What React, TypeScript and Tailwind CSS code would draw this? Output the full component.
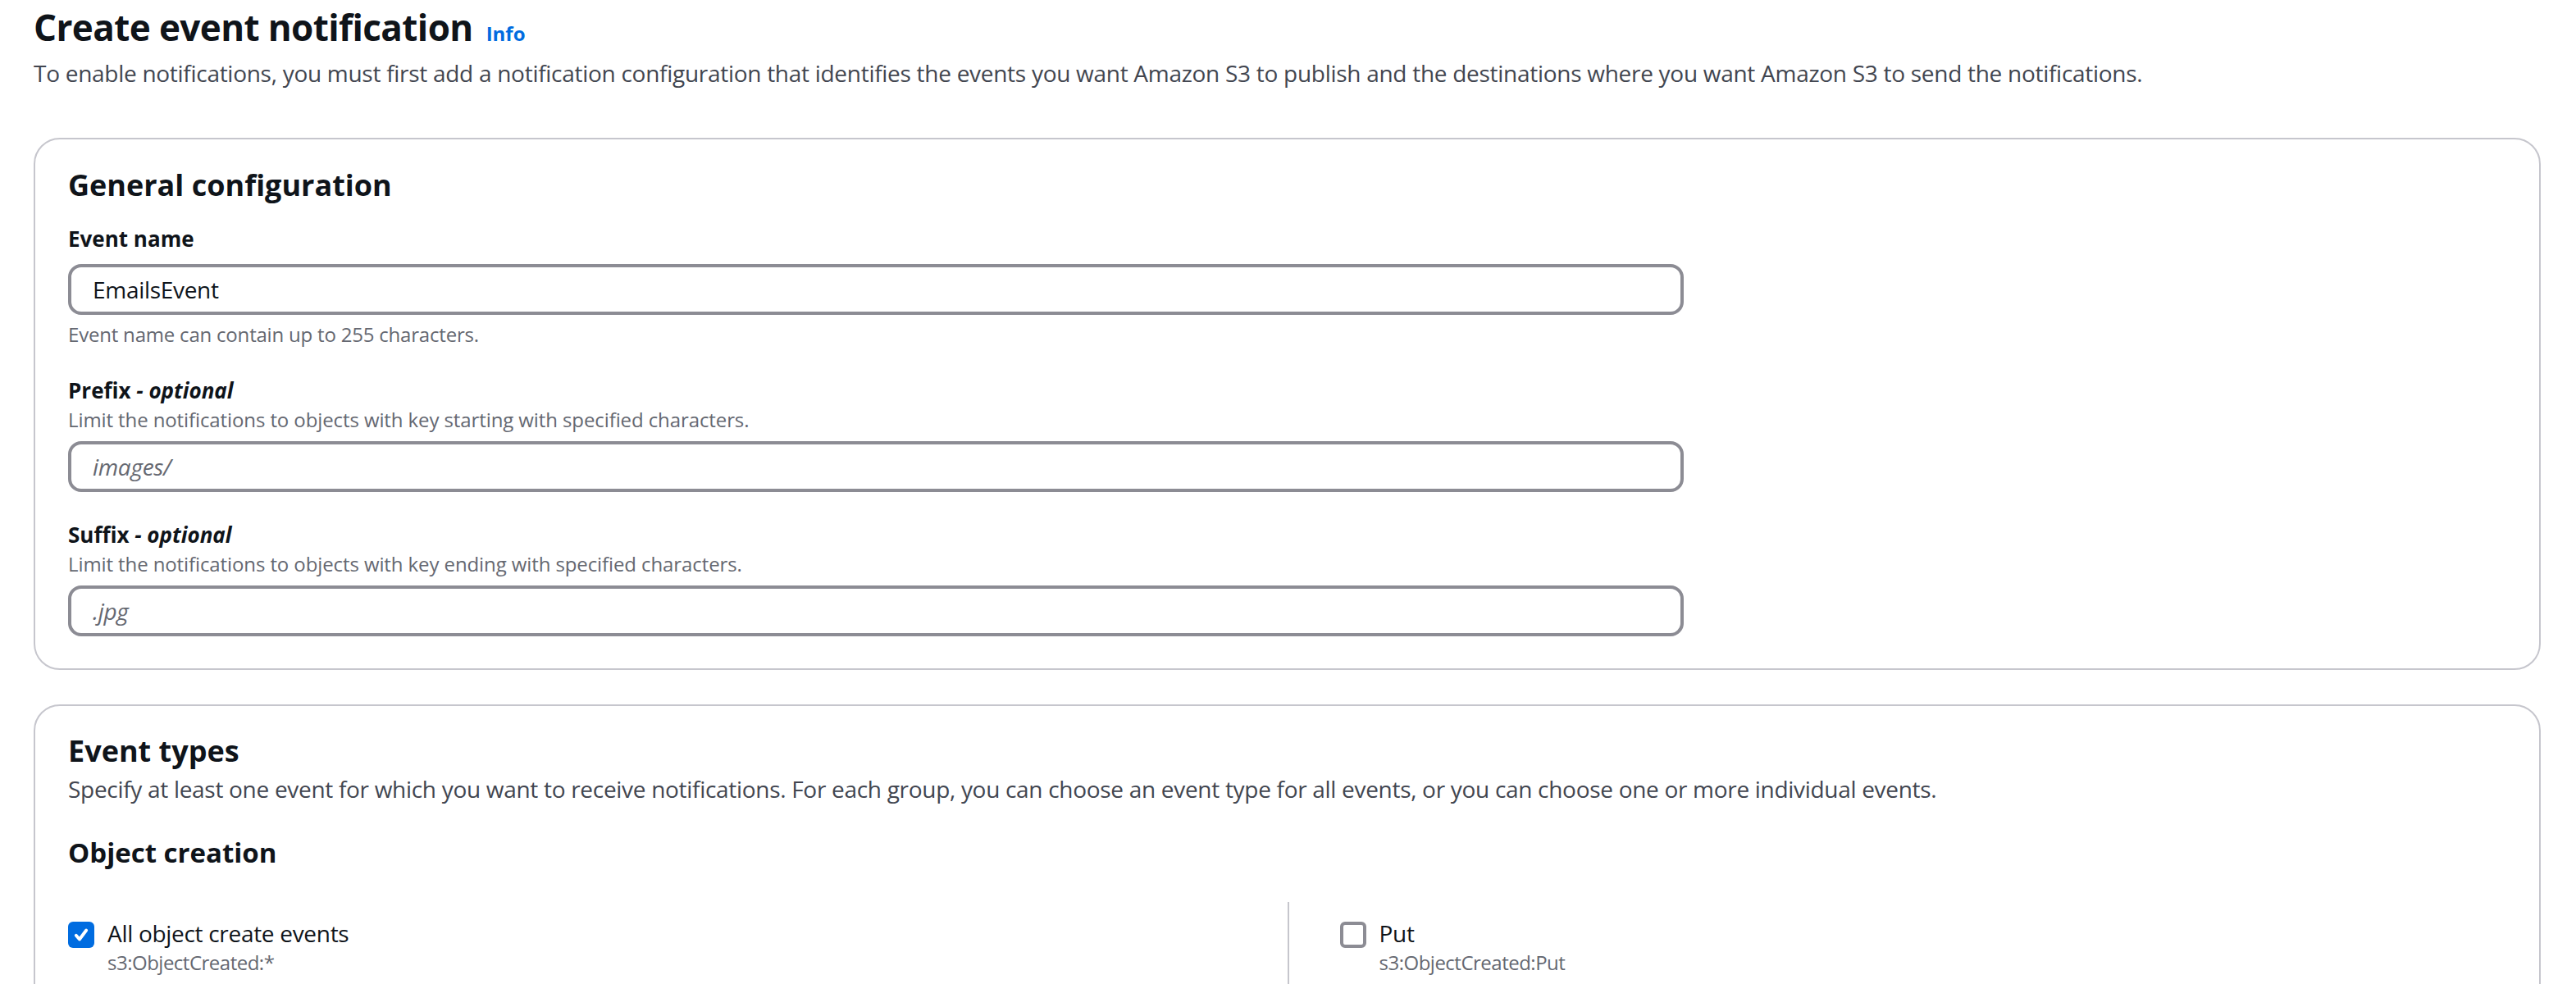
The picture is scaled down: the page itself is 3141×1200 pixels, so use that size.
import React from "react";

const font = { fontFamily: '"Open Sans", "Liberation Sans", sans-serif' };

type FieldProps = {
  label: string;
  optional?: boolean;
  description?: string;
  hint?: string;
  value?: string;
  placeholder?: string;
};

const Field = ({ label, optional, description, hint, value, placeholder }: FieldProps) => (
  <div className="flex flex-col">
    <label className="text-[26px] leading-[40px] font-bold text-[#0f141a]">
      {label}
      {optional && <span className="italic"> - optional</span>}
    </label>
    {description && (
      <p className="text-[24px] leading-[32px] tracking-[-0.1px] text-[#656871]">{description}</p>
    )}
    <div
      className={`w-[1970px] h-[62px] border-[4px] border-[#8c8c94] rounded-[16px] flex items-center px-[26px] text-[28px] tracking-[-0.3px] ${
        description ? "mt-[10px]" : "mt-[11px]"
      }`}
    >
      {value ? (
        <span className="text-[#0f141a]">{value}</span>
      ) : (
        <span className="italic text-[#656871]">{placeholder}</span>
      )}
    </div>
    {hint && (
      <p className="mt-[8px] text-[24px] leading-[32px] tracking-[-0.2px] text-[#656871]">{hint}</p>
    )}
  </div>
);

const Checkbox = ({ checked }: { checked?: boolean }) =>
  checked ? (
    <div className="w-[32px] h-[32px] rounded-[6px] bg-[#006ce0] flex items-center justify-center shrink-0">
      <svg width="22" height="22" viewBox="0 0 16 16" fill="none">
        <path d="M3.5 8.5l3 3.5 6-8" stroke="#fff" strokeWidth="2.8" strokeLinecap="round" strokeLinejoin="round" />
      </svg>
    </div>
  ) : (
    <div className="w-[32px] h-[32px] rounded-[6px] border-[4px] border-[#8c8c94] bg-white shrink-0" />
  );

const Option = ({ label, api, checked }: { label: string; api: string; checked?: boolean }) => (
  <div className="flex items-start gap-[16px]">
    <div className="pt-[6px]">
      <Checkbox checked={checked} />
    </div>
    <div className="flex flex-col">
      <span className="text-[28px] leading-[40px] tracking-[-0.3px] text-[#0f141a]">{label}</span>
      <span className="text-[24px] leading-[32px] tracking-[-0.5px] text-[#656871]">{api}</span>
    </div>
  </div>
);

export default function App() {
  return (
    <div className="min-h-screen bg-white pl-[41px] pr-[43px] pt-[3px]" style={font}>
      {/* Page header */}
      <div className="flex items-baseline gap-[16px]">
        <h1 className="text-[44px] leading-[60px] font-bold tracking-[-0.6px] text-[#0f141a]">
          Create event notification
        </h1>
        <a className="text-[24px] font-bold text-[#006ce0]">Info</a>
      </div>
      <p className="mt-[6px] text-[28px] leading-[40px] tracking-[-0.28px] text-[#424650]">
        To enable notifications, you must first add a notification configuration that identifies the events you
        want Amazon S3 to publish and the destinations where you want Amazon S3 to send the notifications.
      </p>

      {/* General configuration */}
      <section className="mt-[59px] border-2 border-[#c6c6cd] rounded-[32px] px-[40px] pt-[34px] pb-[39px]">
        <h2 className="text-[36px] leading-[44px] font-bold text-[#0f141a]">General configuration</h2>
        <div className="mt-[23px] flex flex-col gap-[32px]">
          <Field
            label="Event name"
            value="EmailsEvent"
            hint="Event name can contain up to 255 characters."
          />
          <Field
            label="Prefix"
            optional
            description="Limit the notifications to objects with key starting with specified characters."
            placeholder="images/"
          />
          <Field
            label="Suffix"
            optional
            description="Limit the notifications to objects with key ending with specified characters."
            placeholder=".jpg"
          />
        </div>
      </section>

      {/* Event types */}
      <section className="mt-[42px] border-2 border-[#c6c6cd] rounded-[32px] px-[40px] pt-[33px] pb-[40px]">
        <h2 className="text-[36px] leading-[44px] font-bold text-[#0f141a]">Event types</h2>
        <p className="mt-[4px] text-[28px] leading-[40px] tracking-[-0.3px] text-[#424650]">
          Specify at least one event for which you want to receive notifications. For each group, you can choose an
          event type for all events, or you can choose one or more individual events.
        </p>
        <h3 className="mt-[38px] text-[33px] leading-[40px] font-bold text-[#0f141a]">Object creation</h3>
        <div className="mt-[40px] grid grid-cols-2">
          <div className="pt-[18px] pb-[20px]">
            <Option label="All object create events" api="s3:ObjectCreated:*" checked />
          </div>
          <div className="border-l-2 border-[#c6c6cd] pl-[62px] pt-[18px] pb-[20px]">
            <Option label="Put" api="s3:ObjectCreated:Put" />
          </div>
        </div>
      </section>
    </div>
  );
}
